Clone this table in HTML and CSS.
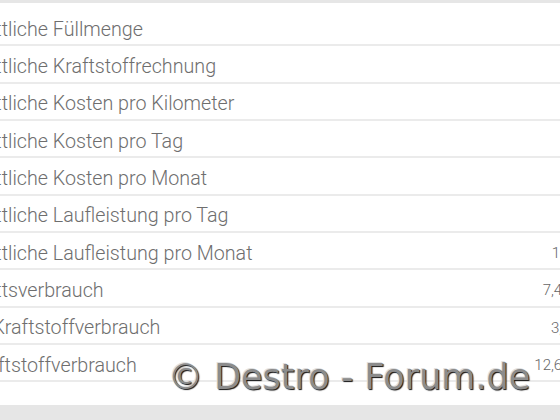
FILE: index.html
```html
<!DOCTYPE html>
<html lang="de">
<head>
<meta charset="utf-8">
<title>Statistik</title>
<link rel="stylesheet" href="styles.css">
</head>
<body>
<div class="page">
  <div class="card">
    <ul class="list">
      <li class="row"><span class="label">Durchschnittliche Füllmenge</span><span class="value">42,18 L</span></li>
      <li class="row"><span class="label">Durchschnittliche Kraftstoffrechnung</span><span class="value">62,35 €</span></li>
      <li class="row"><span class="label">Durchschnittliche Kosten pro Kilometer</span><span class="value">0,11 €</span></li>
      <li class="row"><span class="label">Durchschnittliche Kosten pro Tag</span><span class="value">2,85 €</span></li>
      <li class="row"><span class="label">Durchschnittliche Kosten pro Monat</span><span class="value">86,70 €</span></li>
      <li class="row"><span class="label">Durchschnittliche Laufleistung pro Tag</span><span class="value">25 km</span></li>
      <li class="row"><span class="label">Durchschnittliche Laufleistung pro Monat</span><span class="value">1.356 km</span></li>
      <li class="row"><span class="label">Durchschnittsverbrauch</span><span class="value">7,45 L/100</span></li>
      <li class="row"><span class="label">Geringster Kraftstoffverbrauch</span><span class="value">3,9 L/100</span></li>
      <li class="row"><span class="label">Tiefster Kraftstoffverbrauch</span><span class="value">12,65 L/100</span></li>
    </ul>
  </div>
  <div class="watermark">© Destro - Forum.de</div>
</div>
</body>
</html>
```

FILE: styles.css
```css
html, body {
  margin: 0;
  padding: 0;
}
body {
  background: #e6e6e6;
  width: 560px;
  height: 420px;
  overflow: hidden;
}
.page {
  position: relative;
  width: 560px;
  height: 420px;
  overflow: hidden;
}
.card {
  margin-top: 3px;
  background: #ffffff;
  padding: 6px 0 23px 0;
}
.list {
  list-style: none;
  margin: 0 -53px 0 -102px;
  padding: 0;
}
.row {
  box-sizing: border-box;
  height: 37.33px;
  padding-top: 5px;
  display: flex;
  align-items: center;
  justify-content: space-between;
  border-bottom: 2px solid #ebebeb;
  font-family: Roboto, "Liberation Sans", sans-serif;
  font-weight: 300;
  font-size: 19.7px;
  color: #6e6e6e;
  white-space: nowrap;
}
.value {
  font-size: 15px;
  color: #666666;
}
.watermark {
  position: absolute;
  left: 168px;
  top: 357px;
  font-family: "DejaVu Sans", Verdana, sans-serif;
  font-size: 35px;
  color: #8c8c8c;
  white-space: nowrap;
  text-shadow: 1px 1px 1px #111, -1px -1px 0 #e0e0e0;
}
```
